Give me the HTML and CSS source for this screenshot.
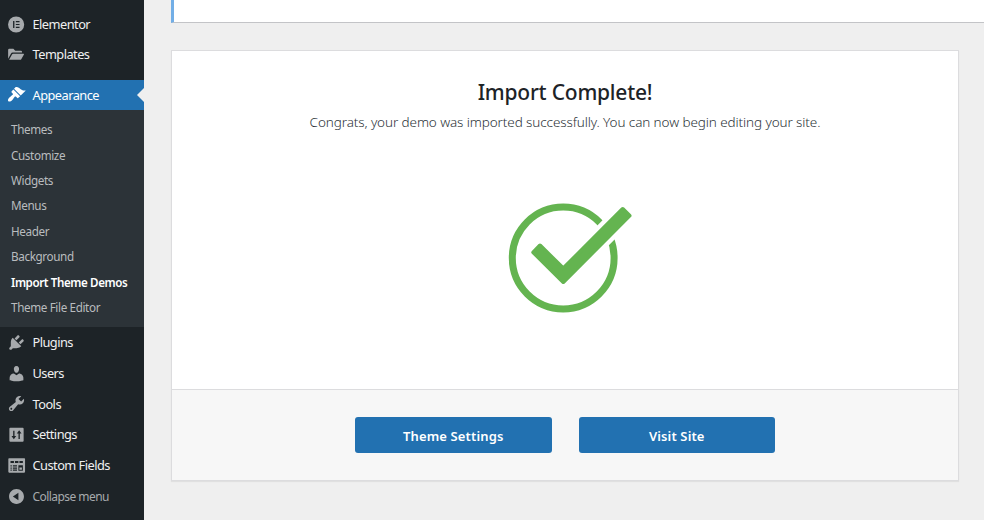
FILE: index.html
```html
<!DOCTYPE html>
<html lang="en">
<head>
<meta charset="utf-8">
<title>Import Theme Demos</title>
<link rel="stylesheet" href="styles.css">
</head>
<body>
<nav class="sidebar">
  <a class="item"><svg class="icon" viewBox="0 0 20 20"><path fill-rule="evenodd" d="M9.600 1.500a8.500 8.500 0 1 0 0 17a8.500 8.500 0 1 0 0-17zM6.400 6.400H7.800v7.200H6.400zM9.300 6.400h3.900v1.300H9.300zM9.300 9.350h3.900v1.300H9.300zM9.300 12.300h3.900v1.300H9.300z"/></svg><span>Elementor</span></a>
  <a class="item templates"><svg class="icon" viewBox="0 0 20 20"><path d="M1.200 14.500V5.200q0-1.200 1.200-1.200h4.300l2 2h6q1.100 0 1.100 1.100v.9H6.100q-1.300 0-2 1.200zM2.200 15.600l3.200-5.800q.4-.7 1.200-.7h10.800q.8 0 .4.8l-2.800 5q-.4.7-1.200.7z"/></svg><span>Templates</span></a>
  <a class="item current"><svg class="icon" viewBox="0 0 20 20"><path d="M14.480 11.060L7.410 3.990l1.500-1.500c.5-.56 2.300-.47 3.510.32 1.210.8 1.430 1.280 2.910 2.100 1.180.64 2.450 1.260 4.450.85zm-.71.71L6.700 4.700 4.930 6.470c-.39.39-.39 1.020 0 1.410l1.060 1.060c.39.39.39 1.030 0 1.420-.6.6-1.430 1.110-2.210 1.690-.35.26-.7.53-1.010.84C1.430 14.230.4 16.080 1.400 17.070c.99 1 2.840-.03 4.180-1.360.31-.31.58-.66.85-1.020.57-.78 1.080-1.610 1.690-2.210.39-.39 1.020-.39 1.410 0l1.060 1.060c.39.39 1.020.39 1.410 0z"/></svg><span>Appearance</span></a>
  <div class="submenu">
    <a>Themes</a>
    <a>Customize</a>
    <a>Widgets</a>
    <a>Menus</a>
    <a>Header</a>
    <a>Background</a>
    <a class="active">Import Theme Demos</a>
    <a>Theme File Editor</a>
  </div>
  <a class="item"><svg class="icon" viewBox="0 0 20 20"><path d="M13.110 4.360L9.870 7.600 8 5.730l3.240-3.240c.35-.34 1.050-.2 1.560.32.52.51.66 1.210.31 1.550zm-8 1.770l.91-1.120 9.010 9.010-1.190.84c-.71.71-2.630 1.160-3.820 1.160H6.140L4.900 17.260c-.59.59-1.540.59-2.120 0-.59-.58-.59-1.530 0-2.120l1.240-1.240v-3.880c0-1.130.4-3.190 1.090-3.890zm7.260 3.970l3.240-3.240c.34-.35 1.040-.21 1.550.31.52.51.66 1.210.31 1.550l-3.240 3.250z"/></svg><span>Plugins</span></a>
  <a class="item"><svg class="icon" viewBox="0 0 20 20"><path d="M10 9.250c-2.270 0-2.730-3.440-2.730-3.440C7 4.020 7.820 2 9.970 2c2.160 0 2.980 2.020 2.710 3.810 0 0-.41 3.440-2.680 3.440zm0 2.570L12.720 10c2.390 0 4.520 2.330 4.520 4.530v2.490s-3.650 1.130-7.240 1.130c-3.650 0-7.240-1.130-7.240-1.130v-2.490c0-2.250 1.940-4.480 4.470-4.480z"/></svg><span>Users</span></a>
  <a class="item"><svg class="icon" viewBox="0 0 20 20"><path d="M16.680 9.770c-1.340 1.340-3.300 1.670-4.950.99l-5.410 6.520c-.99.99-2.590.99-3.580 0s-.99-2.590 0-3.570l6.520-5.420c-.68-1.650-.35-3.610.99-4.950 1.280-1.280 3.120-1.620 4.720-1.060l-2.890 2.890 2.820 2.820 2.860-2.870c.53 1.580.18 3.390-1.080 4.650zM3.810 16.210c.4.39 1.040.39 1.430 0 .4-.4.4-1.040 0-1.430-.39-.4-1.030-.4-1.430 0-.39.39-.39 1.030 0 1.430z"/></svg><span>Tools</span></a>
  <a class="item"><svg class="icon" viewBox="0 0 20 20"><path fill-rule="evenodd" d="M3.500 3h13q1 0 1 1v12.500q0 1-1 1h-13q-1 0-1-1V4q0-1 1-1zM6.500 6v5.700H4.700l2.500 3.300 2.500-3.300H7.900V6zM12.100 14.800V9H10.300L12.800 5.500 15.300 9H13.500v5.800z"/></svg><span>Settings</span></a>
  <a class="item"><svg class="icon" viewBox="0 0 20 20"><path fill-rule="evenodd" d="M2.200 2.300h16q.8 0 .8.800v13.600q0 .8-.8.800h-16q-.8 0-.8-.8V3.100q0-.8.800-.8zM3.700 5.300v2.100h3.600V5.300zM8.400 5.300v2.100H12V5.300zM13.100 5.300v2.100h3.600V5.300zM3.700 9.800V11H5V9.800zM6.200 9.800V11h4.300V9.800zM3.700 12.100v1.200H5v-1.200zM6.200 12.100v1.200h4.300v-1.200zM3.700 14.300v1.200H5v-1.200zM6.200 14.300v1.200h4.300v-1.200zM12 9.800v5.700h4.700V9.800zM13 12h2.700v2.600H13z"/></svg><span>Custom Fields</span></a>
  <a class="item collapse"><svg class="icon" viewBox="0 0 20 20"><path d="M10 2.160c4.330 0 7.840 3.510 7.840 7.840s-3.510 7.840-7.840 7.840S2.160 14.330 2.160 10 5.710 2.160 10 2.160zm2 11.720V6.120L6.180 9.970z"/></svg><span>Collapse menu</span></a>
</nav>
<main class="content">
  <div class="notice"></div>
  <section class="panel">
    <div class="panel-body">
      <h1>Import Complete!</h1>
      <p>Congrats, your demo was imported successfully. You can now begin editing your site.</p>
      <svg class="check" viewBox="0 0 126 112">
        <circle class="ring" cx="55.200" cy="55" r="50.900"/>
        <path class="gap" d="M25.300 49.300L32 42.500 55.300 65.500 114.700 6 121.500 12.700 55.300 79z"/>
        <path class="tick" d="M25.300 49.300L32 42.500 55.300 65.500 114.700 6 121.500 12.700 55.300 79z"/>
      </svg>
    </div>
    <footer class="panel-footer">
      <a class="button">Theme Settings</a>
      <a class="button">Visit Site</a>
    </footer>
  </section>
</main>
</body>
</html>
```
FILE: styles.css
```css
* { box-sizing: border-box; }
body {
  margin: 0;
  height: 520px;
  overflow: hidden;
  display: flex;
  background: #efefef;
  color: #1d2327;
  font-family: "Noto Sans", sans-serif;
}
.sidebar {
  width: 144px;
  height: 520px;
  flex: none;
  padding-top: 9px;
  background: #1d2327;
}
.item {
  display: flex;
  align-items: center;
  height: 30.700px;
  padding-left: 7px;
  gap: 6.500px;
  color: #f0f0f1;
  font-size: 12.800px;
  letter-spacing: -0.530px;
  white-space: nowrap;
}
.templates { height: 29.300px; }
.icon { width: 19px; height: 19px; flex: none; fill: #a7aaad; }
.current {
  position: relative;
  height: 30px;
  margin-top: 11px;
  background: #2271b1;
  color: #fff;
}
.current .icon { fill: #fff; }
.current::after {
  content: "";
  position: absolute;
  right: 0;
  top: 8px;
  border: 7.500px solid transparent;
  border-left: 0;
  border-right-color: #efefef;
}
.submenu {
  height: 217px;
  padding: 7.200px 0 0 11px;
  background: #2c3338;
}
.submenu a {
  display: block;
  height: 25.450px;
  line-height: 25.450px;
  color: #b9bcbf;
  font-size: 11.700px;
  letter-spacing: -0.370px;
  white-space: nowrap;
}
.submenu .active { color: #fff; font-weight: 600; font-size: 11.600px; letter-spacing: -0.400px; }
.collapse { height: 32.500px; color: #a7aaad; font-size: 12px; letter-spacing: -0.550px; }
.content { flex: 1; padding-left: 27px; }
.notice {
  height: 23px;
  background: #fff;
  border-left: 3px solid #72aee6;
  border-bottom: 1px solid #c3c4c7;
}
.panel {
  width: 788px;
  height: 431px;
  margin-top: 27px;
  border: 1px solid #dcdcde;
  background: #fff;
  box-shadow: 0 1px 1px rgba(0, 0, 0, .06);
}
.panel-body { height: 338px; text-align: center; padding-top: 26px; }
h1 { margin: 0; font-size: 21px; line-height: 30px; font-weight: 500; letter-spacing: -0.220px; }
p { margin: 5px 0 0; font-size: 13.500px; line-height: 20px; font-weight: 300; letter-spacing: -0.100px; color: #2c3338; }
.check { display: block; width: 126px; height: 112px; margin: 71px 0 0 336px; }
.ring { fill: none; stroke: #64b450; stroke-width: 7; }
.gap { fill: #fff; stroke: #fff; stroke-width: 12.600; }
.tick { fill: #64b450; stroke: #64b450; stroke-width: 4; stroke-linejoin: round; }
.panel-footer {
  height: 91px;
  padding-top: 27px;
  display: flex;
  justify-content: center;
  gap: 27px;
  border-top: 1px solid #dcdcde;
  background: #f7f7f7;
}
.button {
  width: 196.500px;
  height: 36px;
  border-radius: 3px;
  background: #2271b1;
  color: #fff;
  font-size: 13px;
  line-height: 38px;
  font-weight: 600;
  letter-spacing: 0.140px;
  text-align: center;
}
```
